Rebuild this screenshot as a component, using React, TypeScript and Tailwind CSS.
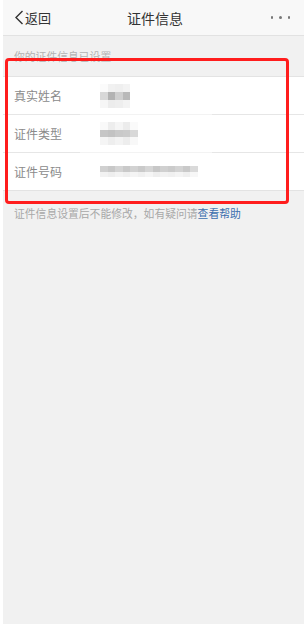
import React from "react";

const nameCells = [
  ["bg-[#fbfbfb]", "bg-[#f1f1f1]", "bg-[#efefef]", "bg-[#f3f3f3]"],
  ["bg-[#d8d8d8]", "bg-[#b3b3b3]", "bg-[#cfcfcf]", "bg-[#b9b9b9]"],
  ["bg-[#f6f6f6]", "bg-[#ececec]", "bg-[#eeeeee]", "bg-[#f3f3f3]"],
];

const typeCells = [
  ["bg-[#f9f9f9]", "bg-[#ededed]", "bg-[#f5f5f5]", "bg-[#ececec]", "bg-[#fafafa]"],
  ["bg-[#c6c6c6]", "bg-[#c2c2c2]", "bg-[#c9c9c9]", "bg-[#cbcbcb]", "bg-[#d8d8d8]"],
  ["bg-[#f5f5f5]", "bg-[#eeeeee]", "bg-[#f3f3f3]", "bg-[#ededed]", "bg-[#f8f8f8]"],
];

const numCells = [
  [
    "bg-[#d0d0d0]", "bg-[#c8c8c8]", "bg-[#d4d4d4]", "bg-[#c9c9c9]", "bg-[#d2d2d2]",
    "bg-[#cacaca]", "bg-[#d5d5d5]", "bg-[#c7c7c7]", "bg-[#d0d0d0]", "bg-[#cbcbcb]",
    "bg-[#d3d3d3]", "bg-[#c9c9c9]", "bg-[#dadada]",
  ],
  [
    "bg-[#f2f2f2]", "bg-[#eeeeee]", "bg-[#f3f3f3]", "bg-[#efefef]", "bg-[#f4f4f4]",
    "bg-[#f0f0f0]", "bg-[#f5f5f5]", "bg-[#eeeeee]", "bg-[#f2f2f2]", "bg-[#f0f0f0]",
    "bg-[#f4f4f4]", "bg-[#efefef]", "bg-[#f7f7f7]",
  ],
];

function Mosaic({ cells, cellH }: { cells: string[][]; cellH: string }) {
  return (
    <div className="flex flex-col">
      {cells.map((row, i) => (
        <div key={i} className="flex">
          {row.map((c, j) => (
            <div key={j} className={`w-[7.5px] ${cellH} ${c}`} />
          ))}
        </div>
      ))}
    </div>
  );
}

function Separator() {
  return (
    <div className="flex h-px">
      <div className="w-[77px] bg-[#e6e6e6]" />
      <div className="w-[132px] bg-[#f3f3f3]" />
      <div className="flex-1 bg-[#e6e6e6]" />
    </div>
  );
}

function Row({ label, children }: { label: string; children: React.ReactNode }) {
  return (
    <div className="flex h-[37px] items-center">
      <div className="w-[86px] pl-[11px] text-[12px] leading-none text-[#8a8a8a]">{label}</div>
      <div className="ml-[11px] flex items-center">{children}</div>
    </div>
  );
}

export default function App() {
  return (
    <div
      className="h-[624px] w-[304px] overflow-hidden bg-white pl-[3px]"
      style={{ fontFamily: '"Noto Sans CJK SC", "Noto Sans", sans-serif' }}
    >
      <div className="relative flex h-full flex-col bg-[#f1f1f1]">
        <div className="relative flex h-[36px] items-center border-b border-[#e2e2e2] bg-[#f8f8f8]">
          <div className="flex items-center pl-[11px]">
            <svg width="10" height="15" viewBox="0 0 10 15" className="mr-[1px]">
              <path d="M8.5 1 L2 7.5 L8.5 14" fill="none" stroke="#333" strokeWidth="1.4" />
            </svg>
            <span className="text-[13px] leading-none text-[#333]">返回</span>
          </div>
          <div className="absolute left-0 right-0 top-0 flex h-[35px] items-center justify-center pl-[3px]">
            <span className="text-[14px] leading-none text-[#333]">证件信息</span>
          </div>
          <div className="ml-auto mr-[14px] flex items-center gap-[6px]">
            <div className="h-[2.5px] w-[2.5px] rounded-full bg-[#777]" />
            <div className="h-[2.5px] w-[2.5px] rounded-full bg-[#777]" />
            <div className="h-[2.5px] w-[2.5px] rounded-full bg-[#777]" />
          </div>
        </div>

        <div className="flex h-[40px] items-center pl-[11px] pt-[1px]">
          <div className="origin-left scale-[0.9] whitespace-nowrap text-[12px] leading-none text-[#b3b3b3]">
            你的证件信息已设置
          </div>
        </div>

        <div className="border-y border-[#e3e3e3] bg-white">
          <Row label="真实姓名">
            <Mosaic cells={nameCells} cellH="h-[8px]" />
          </Row>
          <Separator />
          <Row label="证件类型">
            <Mosaic cells={typeCells} cellH="h-[7.5px]" />
          </Row>
          <Separator />
          <Row label="证件号码">
            <Mosaic cells={numCells} cellH="h-[5.5px]" />
          </Row>
        </div>

        <div className="flex h-[44px] items-center pl-[11px]">
          <div className="origin-left scale-[0.9] whitespace-nowrap text-[12px] leading-none text-[#a8a8a8]">
            证件信息设置后不能修改，如有疑问请<span className="text-[#3c6fae]">查看帮助</span>
          </div>
        </div>

        <div className="pointer-events-none absolute left-[2px] top-[58px] h-[146px] w-[284px] rounded-[4px] border-[3px] border-[#ff1d1d]" />
      </div>
    </div>
  );
}
